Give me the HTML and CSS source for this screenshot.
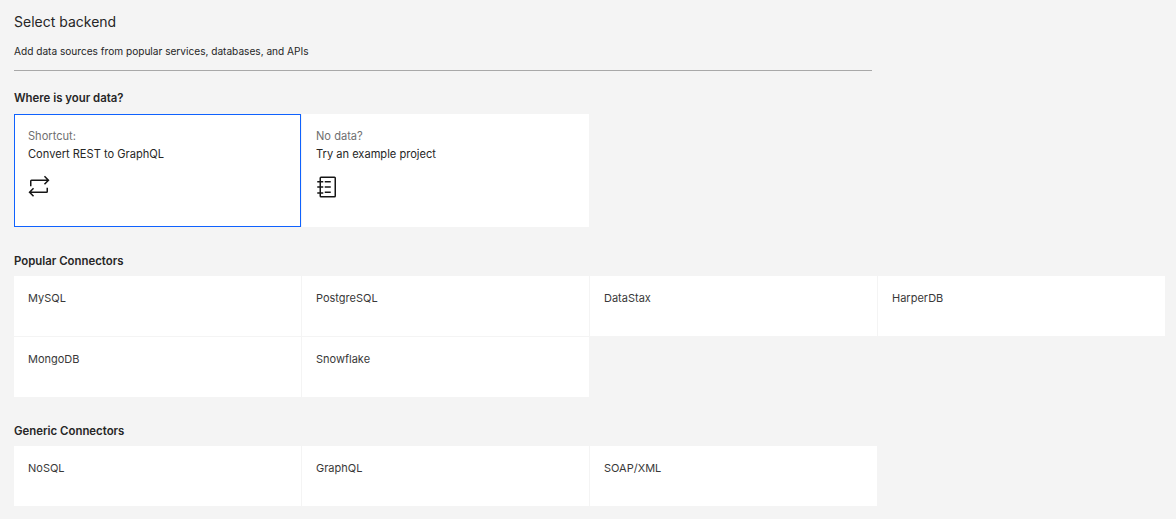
FILE: index.html
```html
<!DOCTYPE html>
<html lang="en">
<head>
<meta charset="utf-8">
<title>Select backend</title>
<link rel="stylesheet" href="styles.css">
</head>
<body>
<main class="page">
  <header class="header">
    <h1 class="title">Select backend</h1>
    <p class="subtitle">Add data sources from popular services, databases, and APIs</p>
  </header>
  <section class="section first">
    <h2 class="heading">Where is your data?</h2>
    <div class="grid">
      <div class="card tall selected">
        <div class="muted">Shortcut:</div>
        <div class="label">Convert REST to GraphQL</div>
        <svg class="icon" viewBox="0 0 32 32" fill="#161616"><path d="M6,6H26.17l-3.59-3.59L24,1l6,6-6,6-1.42-1.41L26.17,8H6v7H4V8A2,2,0,0,1,6,6Z"/><path d="M9.42,18.41,5.83,22H26V17h2v5a2,2,0,0,1-2,2H5.83l3.59,3.59L8,29,2,23l6-6Z"/></svg>
      </div>
      <div class="card tall">
        <div class="muted">No data?</div>
        <div class="label">Try an example project</div>
        <svg class="icon" viewBox="0 0 32 32" fill="#161616"><path d="M13,8h8v2H13Z"/><path d="M13,15h8v2H13Z"/><path d="M13,22h8v2H13Z"/><path fill-rule="evenodd" d="M8,2H26a2,2,0,0,1,2,2V28a2,2,0,0,1-2,2H8a2,2,0,0,1-2-2V25H3V23H6V17H3V15H6V10H3V8H6V4A2,2,0,0,1,8,2ZM8,4V8h3v2H8v5h3v2H8v6h3v2H8v3H26V4Z"/></svg>
      </div>
    </div>
  </section>
  <section class="section">
    <h2 class="heading">Popular Connectors</h2>
    <div class="grid">
      <div class="card">MySQL</div>
      <div class="card">PostgreSQL</div>
      <div class="card">DataStax</div>
      <div class="card">HarperDB</div>
      <div class="card">MongoDB</div>
      <div class="card">Snowflake</div>
    </div>
  </section>
  <section class="section">
    <h2 class="heading">Generic Connectors</h2>
    <div class="grid">
      <div class="card">NoSQL</div>
      <div class="card">GraphQL</div>
      <div class="card">SOAP/XML</div>
    </div>
  </section>
</main>
</body>
</html>
```
FILE: styles.css
```css
* { box-sizing: border-box; }
html, body { margin: 0; height: 100%; }
body {
  background: #f4f4f4;
  color: #161616;
  font-family: "Inter", "Liberation Sans", sans-serif;
  overflow: hidden;
}
.page { padding: 14px 11px 0 14px; }
.header {
  width: 858px;
  height: 57px;
  border-bottom: 1px solid #a8a8a8;
}
.title {
  margin: 0;
  font-size: 14px;
  font-weight: 400;
  line-height: 16px;
  color: #262626;
}
.subtitle {
  margin: 13px 0 0;
  font-size: 10.12px;
  line-height: 16px;
  color: #262626;
}
.section { margin-top: 26px; }
.section.first { margin-top: 19px; }
.heading {
  margin: 0 0 7px;
  font-size: 11.4px;
  font-weight: 600;
  line-height: 16px;
  color: #262626;
}
.first .heading { margin-bottom: 8px; }
.grid {
  display: grid;
  grid-template-columns: repeat(4, 1fr);
  gap: 1px;
}
.card {
  background: #fff;
  height: 60px;
  padding: 14px;
  font-size: 11px;
  line-height: 16px;
  color: #393939;
}
.card.tall { height: 113px; font-size: 11.1px; }
.card.selected { border: 1px solid #0f62fe; padding: 13px; }
.muted { color: #6f6f6f; }
.label { margin-top: 2px; color: #262626; }
.icon { display: block; width: 24px; height: 24px; margin: 13px 0 0 -1px; }
```
